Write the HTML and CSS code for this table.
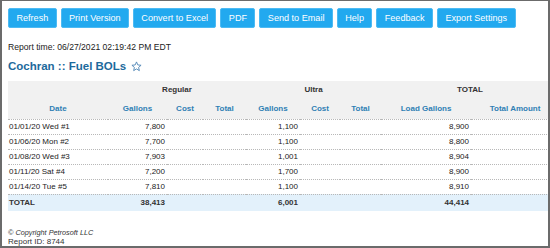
FILE: index.html
```html
<!DOCTYPE html>
<html lang="en">
<head>
    <meta charset="UTF-8">
    <title>Cochran :: Fuel BOLs</title>
    <link rel="stylesheet" href="styles.css">
</head>
<body>
    <div class="frame">
        <!-- Toolbar -->
        <div class="toolbar">
            <button class="btn">Refresh</button>
            <button class="btn">Print Version</button>
            <button class="btn">Convert to Excel</button>
            <button class="btn">PDF</button>
            <button class="btn">Send to Email</button>
            <button class="btn">Help</button>
            <button class="btn">Feedback</button>
            <button class="btn">Export Settings</button>
        </div>

        <div class="report-time">Report time: 06/27/2021 02:19:42 PM EDT</div>
        <h1 class="title">Cochran :: Fuel BOLs
            <svg class="star" width="11" height="11" viewBox="0 0 24 24"><polygon points="12,2 14.9,8.6 22,9.3 16.6,14 18.2,21 12,17.3 5.8,21 7.4,14 2,9.3 9.1,8.6" fill="none" stroke="#4f86b6" stroke-width="2" stroke-linejoin="round"/></svg>
        </h1>

        <!-- Report table -->
        <table class="report">
            <colgroup>
                <col style="width:100px">
                <col style="width:59px">
                <col style="width:36px">
                <col style="width:43px">
                <col style="width:54px">
                <col style="width:40px">
                <col style="width:41px">
                <col style="width:90px">
                <col style="width:88px">
            </colgroup>
            <thead>
                <tr class="group-row">
                    <th></th>
                    <th colspan="3">Regular</th>
                    <th colspan="3">Ultra</th>
                    <th colspan="2">TOTAL</th>
                </tr>
                <tr class="label-row">
                    <th>Date</th>
                    <th>Gallons</th>
                    <th>Cost</th>
                    <th>Total</th>
                    <th>Gallons</th>
                    <th>Cost</th>
                    <th>Total</th>
                    <th>Load Gallons</th>
                    <th>Total Amount</th>
                </tr>
            </thead>
            <tbody>
                <tr><td class="date">01/01/20 Wed #1</td><td class="num">7,800</td><td></td><td></td><td class="num">1,100</td><td></td><td></td><td class="num">8,900</td><td></td></tr>
                <tr><td class="date">01/06/20 Mon #2</td><td class="num">7,700</td><td></td><td></td><td class="num">1,100</td><td></td><td></td><td class="num">8,800</td><td></td></tr>
                <tr><td class="date">01/08/20 Wed #3</td><td class="num">7,903</td><td></td><td></td><td class="num">1,001</td><td></td><td></td><td class="num">8,904</td><td></td></tr>
                <tr><td class="date">01/11/20 Sat #4</td><td class="num">7,200</td><td></td><td></td><td class="num">1,700</td><td></td><td></td><td class="num">8,900</td><td></td></tr>
                <tr><td class="date">01/14/20 Tue #5</td><td class="num">7,810</td><td></td><td></td><td class="num">1,100</td><td></td><td></td><td class="num">8,910</td><td></td></tr>
            </tbody>
            <tfoot>
                <tr class="total-row"><td class="date">TOTAL</td><td class="num">38,413</td><td></td><td></td><td class="num">6,001</td><td></td><td></td><td class="num">44,414</td><td></td></tr>
            </tfoot>
        </table>

        <div class="footer">
            <div class="copyright">&copy; Copyright Petrosoft LLC</div>
            <div class="report-id">Report ID: 8744</div>
        </div>
    </div>
</body>
</html>
```

FILE: styles.css
```css
* {
    margin: 0;
    padding: 0;
    box-sizing: border-box;
}

body {
    font-family: 'Liberation Sans', Arial, sans-serif;
    background: #fff;
    color: #222;
}

.frame {
    width: 550px;
    height: 248px;
    border: 2px solid #6b6b6b;
    border-top-width: 1px;
    padding: 7px 0 0 6px;
    overflow: hidden;
}

.toolbar {
    display: flex;
    gap: 4px;
    white-space: nowrap;
}

.btn {
    height: 20px;
    padding: 0 7.4px;
    font-family: inherit;
    font-size: 9.1px;
    color: #fff;
    background: #22a9ef;
    border: 1px solid #4dbaf3;
    border-radius: 2px;
}

.report-time {
    margin-top: 14px;
    font-size: 8.6px;
    line-height: 11px;
    color: #222;
}

.title {
    display: flex;
    align-items: center;
    gap: 5px;
    font-size: 11.5px;
    line-height: 14px;
    margin-top: 6px;
    color: #1d6a9c;
}

.star {
    margin-top: 1px;
}

.report {
    margin-top: 8px;
    width: 551px;
    table-layout: fixed;
    border-collapse: collapse;
    font-size: 8px;
}

.report thead tr {
    background: #f1f1f1;
}

.group-row th {
    height: 14px;
    padding-top: 2px;
    color: #333;
    font-weight: bold;
}

.label-row th {
    height: 24px;
    padding-top: 3px;
    color: #2f7fb4;
    font-weight: bold;
    border-bottom: 1px dotted #b8b8b8;
}

.report tbody td {
    height: 15px;
    border-bottom: 1px dotted #b8b8b8;
}

.report td.date {
    padding-left: 1px;
    white-space: nowrap;
}

.report td.num {
    text-align: right;
    padding-right: 2px;
}

.total-row td {
    height: 17px;
    background: #e3f1fb;
    font-weight: bold;
    color: #333;
}

.footer {
    margin-top: 17px;
    color: #333;
}

.copyright {
    font-size: 7.3px;
    font-style: italic;
    line-height: 9px;
}

.report-id {
    font-size: 8px;
    line-height: 9px;
}
```
